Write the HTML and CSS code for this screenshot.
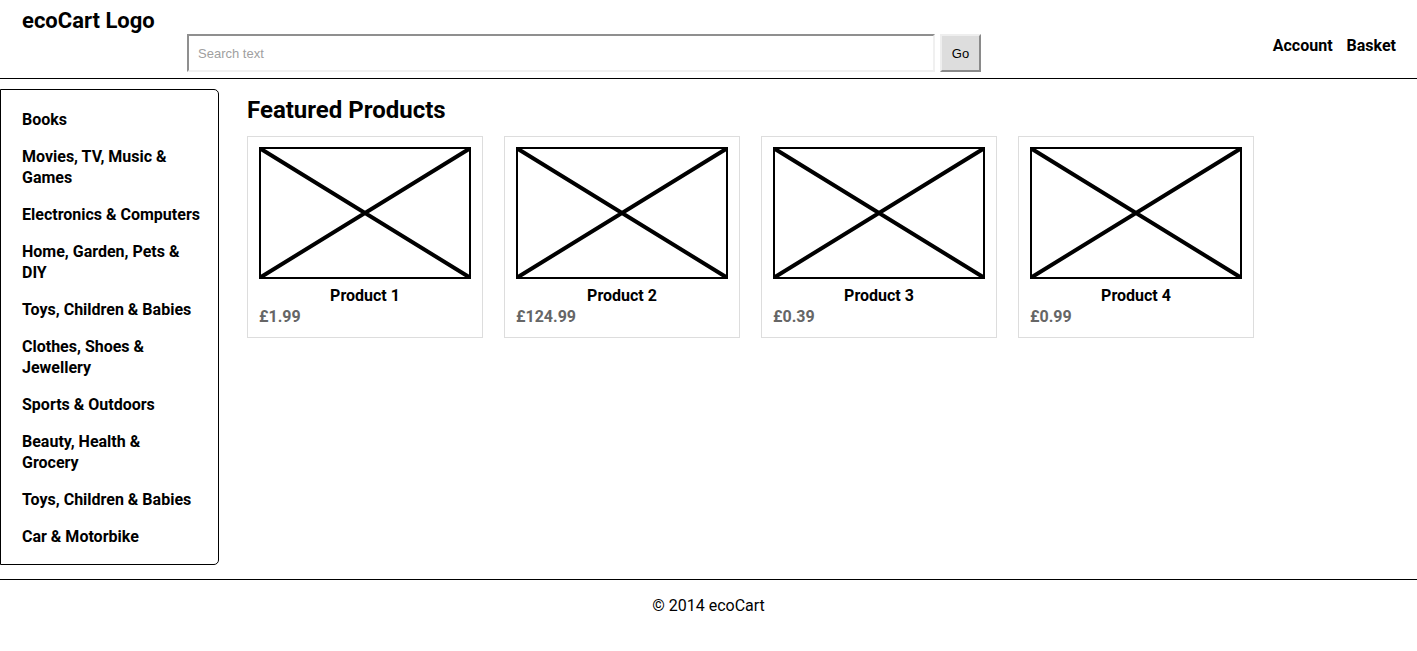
FILE: index.html
```html
<!DOCTYPE html>
<html lang="en">
<head>
  <meta charset="UTF-8">
  <meta name="viewport" content="width=device-width, initial-scale=1.0">
  <title>ecoCart</title>
  <link rel="stylesheet" href="styles.css">
</head>
<body>
  <div class="header">
    <h1 class="logo">ecoCart Logo</h1>
    <form class="search" onsubmit="return false">
      <input type="text" class="search-input" placeholder="Search text">
      <button type="submit" class="search-btn">Go</button>
    </form>
    <div class="nav">
      <a href="#">Account</a>
      <a href="#">Basket</a>
    </div>
  </div>

  <div class="page">
    <ul class="sidebar">
      <li>Books</li>
      <li>Movies, TV, Music &amp; Games</li>
      <li>Electronics &amp; Computers</li>
      <li>Home, Garden, Pets &amp; DIY</li>
      <li>Toys, Children &amp; Babies</li>
      <li>Clothes, Shoes &amp; Jewellery</li>
      <li>Sports &amp; Outdoors</li>
      <li>Beauty, Health &amp; Grocery</li>
      <li>Toys, Children &amp; Babies</li>
      <li>Car &amp; Motorbike</li>
    </ul>

    <div class="main">
      <h2>Featured Products</h2>
      <div class="products">
        <div class="product-card">
          <svg class="placeholder" width="212" height="132" viewBox="0 0 212 132">
            <rect x="1" y="1" width="210" height="130" fill="#fff" stroke="#000" stroke-width="2"/>
            <path d="M2 2 L210 130 M2 130 L210 2" stroke="#000" stroke-width="4"/>
          </svg>
          <div class="product-name">Product 1</div>
          <div class="product-price">£1.99</div>
        </div>
        <div class="product-card">
          <svg class="placeholder" width="212" height="132" viewBox="0 0 212 132">
            <rect x="1" y="1" width="210" height="130" fill="#fff" stroke="#000" stroke-width="2"/>
            <path d="M2 2 L210 130 M2 130 L210 2" stroke="#000" stroke-width="4"/>
          </svg>
          <div class="product-name">Product 2</div>
          <div class="product-price">£124.99</div>
        </div>
        <div class="product-card">
          <svg class="placeholder" width="212" height="132" viewBox="0 0 212 132">
            <rect x="1" y="1" width="210" height="130" fill="#fff" stroke="#000" stroke-width="2"/>
            <path d="M2 2 L210 130 M2 130 L210 2" stroke="#000" stroke-width="4"/>
          </svg>
          <div class="product-name">Product 3</div>
          <div class="product-price">£0.39</div>
        </div>
        <div class="product-card">
          <svg class="placeholder" width="212" height="132" viewBox="0 0 212 132">
            <rect x="1" y="1" width="210" height="130" fill="#fff" stroke="#000" stroke-width="2"/>
            <path d="M2 2 L210 130 M2 130 L210 2" stroke="#000" stroke-width="4"/>
          </svg>
          <div class="product-name">Product 4</div>
          <div class="product-price">£0.99</div>
        </div>
      </div>
    </div>
  </div>

  <div class="footer">© 2014 ecoCart</div>
</body>
</html>
```

FILE: styles.css
```css
body {
  font-family: Roboto, 'Liberation Sans', Arial, sans-serif;
  margin: 0;
  background-color: #fff;
  color: #000;
}
.header {
  display: flex;
  align-items: flex-start;
  height: 72px;
  padding: 0 21px 6px 22px;
  border-bottom: 1px solid #000;
}
.logo {
  width: 165px;
  margin: 8px 0 0 0;
  font-size: 22px;
  line-height: 25px;
  font-weight: 700;
}
.search {
  display: flex;
  gap: 5px;
  margin-top: 34px;
}
.search-input {
  width: 748px;
  height: 38px;
  box-sizing: border-box;
  padding: 0 9px;
  border: 2px solid;
  border-color: #8f8f8f #f0f0f0 #f0f0f0 #8f8f8f;
  font-family: 'Liberation Sans', Arial, sans-serif;
  font-size: 13px;
  outline: none;
}
.search-input::placeholder {
  color: #a0a0a0;
}
.search-btn {
  width: 41px;
  height: 38px;
  padding: 0;
  background-color: #ddd;
  border: 2px solid;
  border-color: #eee #8a8a8a #8a8a8a #eee;
  font-family: 'Liberation Sans', Arial, sans-serif;
  font-size: 13px;
  color: #000;
}
.nav {
  display: flex;
  gap: 14px;
  margin-left: auto;
  margin-top: 35px;
}
.nav a {
  color: #000;
  text-decoration: none;
  font-size: 16px;
  font-weight: 700;
  line-height: 21px;
}
.page {
  display: flex;
  align-items: flex-start;
  margin-top: 10px;
}
.sidebar {
  list-style: none;
  width: 178px;
  margin: 0;
  padding: 11px 18px 9px 21px;
  border: 1px solid #000;
  border-radius: 0 5px 5px 0;
}
.sidebar li {
  padding: 8px 0;
  font-size: 16px;
  font-weight: 700;
  line-height: 21px;
}
.main {
  margin-left: 28px;
}
.main h2 {
  margin: 7px 0 12px 0;
  font-size: 24px;
  line-height: 28px;
  font-weight: 700;
}
.products {
  display: flex;
  gap: 21px;
}
.product-card {
  width: 212px;
  padding: 10px 11px 10px 11px;
  border: 1px solid #ddd;
}
.placeholder {
  display: block;
}
.product-name {
  margin-top: 6px;
  text-align: center;
  font-size: 16px;
  font-weight: 700;
  line-height: 21px;
}
.product-price {
  color: #666;
  font-size: 16px;
  font-weight: 700;
  line-height: 21px;
}
.footer {
  margin-top: 14px;
  padding-top: 15px;
  border-top: 1px solid #000;
  text-align: center;
  font-size: 16px;
  line-height: 21px;
}
```
